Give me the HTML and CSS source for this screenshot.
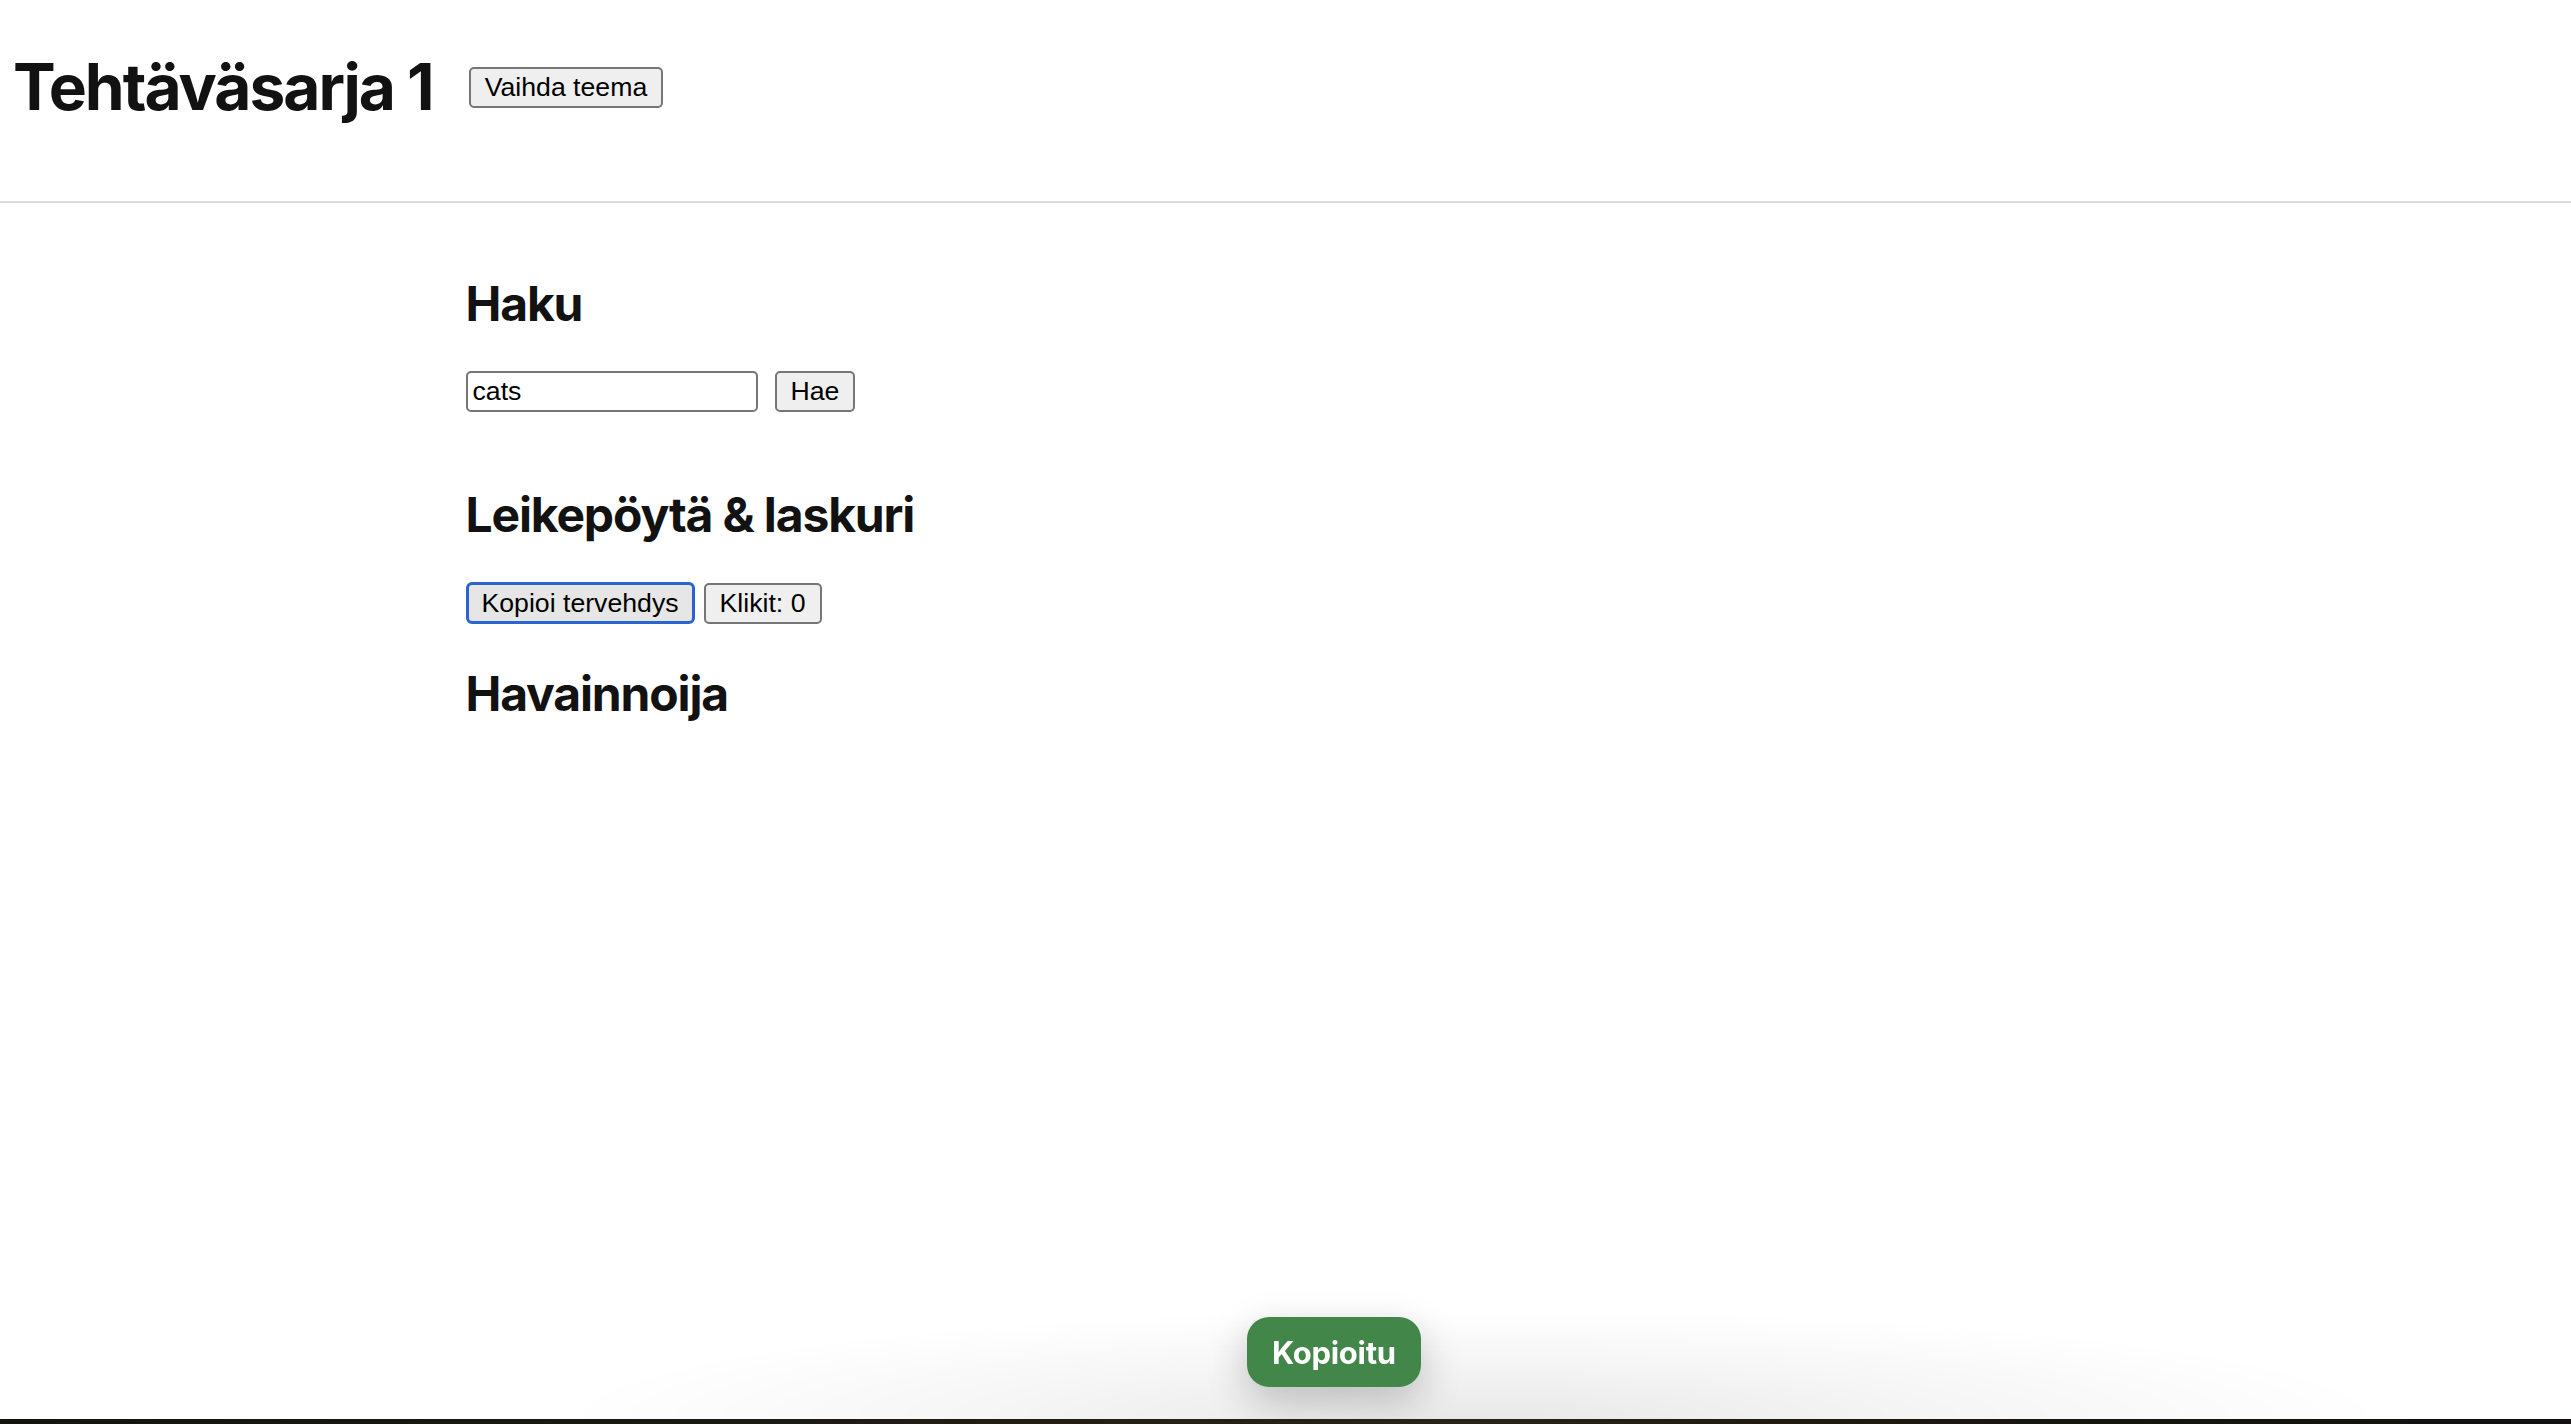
FILE: index.html
```html
<!DOCTYPE html>
<html lang="fi">
<head>
<meta charset="utf-8">
<title>Tehtäväsarja 1</title>
<link rel="stylesheet" href="styles.css">
</head>
<body>
<header class="top">
  <h1 class="title">Tehtäväsarja 1</h1>
  <button class="btn">Vaihda teema</button>
</header>
<main class="content">
  <h2 class="sec-title">Haku</h2>
  <div class="row row-search">
    <input class="field" type="text" value="cats">
    <button class="btn">Hae</button>
  </div>
  <h2 class="sec-title sec-gap">Leikepöytä &amp; laskuri</h2>
  <div class="row row-clip">
    <button class="btn btn-focus">Kopioi tervehdys</button>
    <button class="btn">Klikit: 0</button>
  </div>
  <h2 class="sec-title sec-last">Havainnoija</h2>
</main>
<div class="bottom-shade"></div>
<div class="desk-strip"></div>
<div class="toast">Kopioitu</div>
</body>
</html>
```

FILE: styles.css
```css
html, body {
  margin: 0;
  padding: 0;
  background: #ffffff;
  color: #121212;
  font-family: "Inter", "Noto Sans", sans-serif;
}

body {
  height: 1424px;
  overflow: hidden;
}

.top {
  display: flex;
  align-items: center;
  gap: 36px;
  padding: 48px 13px 75px 13px;
  border-bottom: 2px solid #dcdcdc;
}

.title {
  margin: 0;
  font-size: 64px;
  font-weight: 700;
  line-height: 78px;
  letter-spacing: -2px;
}

.btn {
  font-family: "Liberation Sans", Arial, sans-serif;
  font-size: 26.67px;
  color: #000;
  background: #efefef;
  border: 2px solid #767676;
  border-radius: 5px;
  height: 41px;
  padding: 0 14px;
  line-height: 1;
  box-sizing: border-box;
}

.content {
  display: flex;
  flex-direction: column;
  align-items: flex-start;
  max-width: 1640px;
  margin: 0 auto;
  padding-top: 72px;
}

.sec-title {
  margin: 0 0 38px 0;
  font-size: 48px;
  font-weight: 700;
  line-height: 58px;
  letter-spacing: -1.15px;
}

.sec-gap {
  margin-top: 74px;
}

.sec-last {
  margin-top: 41px;
}

.row {
  display: flex;
  align-items: center;
}

.row-search {
  gap: 17px;
}

.row-clip {
  gap: 9px;
}

.field {
  width: 292px;
  height: 41px;
  box-sizing: border-box;
  border: 2px solid #767676;
  border-radius: 5px;
  padding: 0 5px;
  font-family: "Liberation Sans", Arial, sans-serif;
  font-size: 26.67px;
  color: #000;
  background: #fff;
}

.btn-focus {
  height: 42px;
  background: #e6e6e6;
  border: 3px solid #2b63d0;
  border-radius: 6px;
  padding: 0 13px;
}

.bottom-shade {
  position: fixed;
  left: 560px;
  width: 1830px;
  bottom: 5px;
  height: 110px;
  background: radial-gradient(ellipse 50% 100% at 50% 100%, rgba(0,0,0,0.09), rgba(0,0,0,0.035) 55%, rgba(0,0,0,0) 100%);
  pointer-events: none;
}

.desk-strip {
  position: fixed;
  left: 0;
  right: 0;
  bottom: 0;
  height: 5px;
  background: linear-gradient(90deg, #14130f, #1c1a14 30%, #2a2418 55%, #17150f 80%, #121110);
}

.toast {
  position: fixed;
  left: 1247px;
  top: 1317px;
  height: 70px;
  box-sizing: border-box;
  padding: 0 25px;
  display: flex;
  align-items: center;
  background: #43864a;
  color: #ffffff;
  font-family: "Inter", "Noto Sans", sans-serif;
  font-weight: 700;
  font-size: 31px;
  letter-spacing: -0.3px;
  border-radius: 22px;
  box-shadow: 0 14px 40px rgba(0,0,0,0.22);
}
```
